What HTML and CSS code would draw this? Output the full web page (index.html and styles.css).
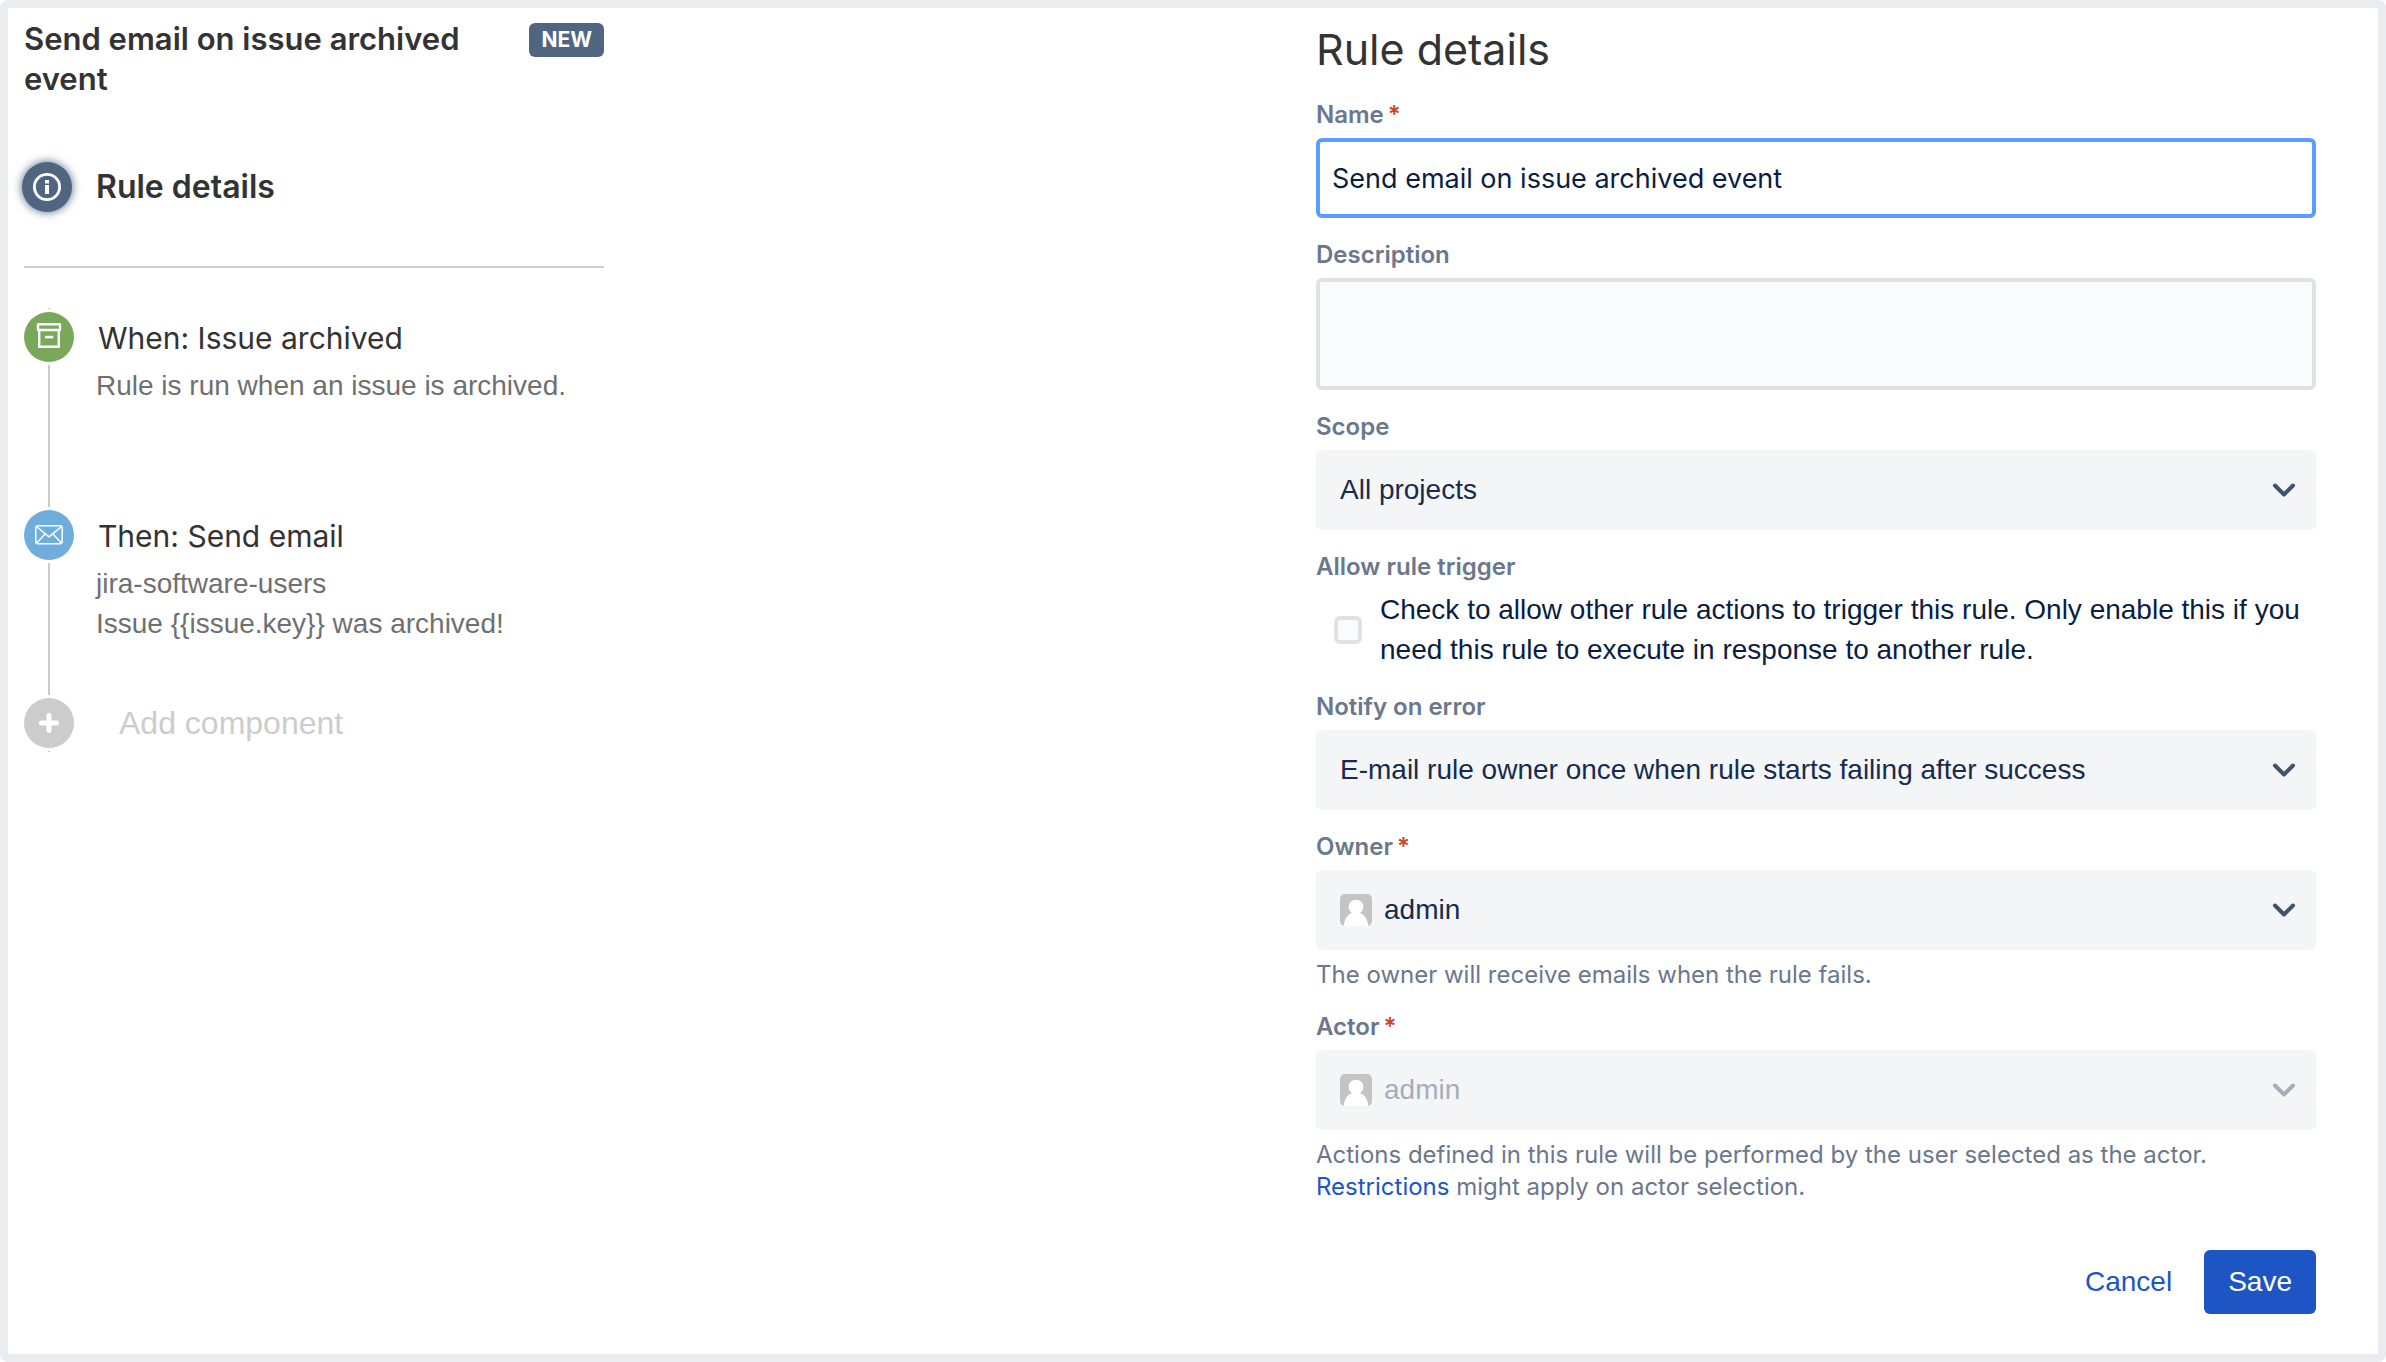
FILE: index.html
```html
<!DOCTYPE html>
<html lang="en">
<head>
<meta charset="utf-8">
<meta name="viewport" content="width=device-width, initial-scale=1">
<title>Send email on issue archived event</title>
<link rel="stylesheet" href="styles.css">
</head>
<body>
<main class="page">
  <aside class="outline">
    <header class="outline-header">
      <h1 class="rule-title">Send email on issue archived event</h1>
      <span class="badge">NEW</span>
    </header>
    <div class="outline-details">
      <span class="dot dot-info">
        <svg viewBox="0 0 50 50" aria-hidden="true"><circle cx="25" cy="25" r="12.6" fill="none" stroke="#fff" stroke-width="2.8"/><path d="M23 18h4v3.6h-4zM23 23h4v9h-4z" fill="#fff"/></svg>
      </span>
      <h2 class="details-title">Rule details</h2>
    </div>
    <ol class="steps">
      <li class="step">
        <span class="dot dot-trigger">
          <svg viewBox="0 0 50 50" aria-hidden="true"><g fill="none" stroke="#fff" stroke-width="2.4" stroke-linejoin="round"><path d="M14 12.2h22v5.8h-22z"/><path d="M15.2 18v16.8h19.6V18"/></g><path d="M21 23.8h8.2v2.6H21z" fill="#fff"/></svg>
        </span>
        <div>
          <h3 class="step-title">When: Issue archived</h3>
          <p class="step-text">Rule is run when an issue is archived.</p>
        </div>
      </li>
      <li class="step step-last">
        <span class="dot dot-action">
          <svg viewBox="0 0 50 50" aria-hidden="true"><g fill="none" stroke="#fff" stroke-width="1.5" stroke-linejoin="round"><rect x="11.8" y="15.8" width="26.4" height="18" rx="2.2"/><path d="M12.5 16.5L25 26.8L37.5 16.5M12.5 33.2L21 24M37.5 33.2L29 24"/></g></svg>
        </span>
        <div>
          <h3 class="step-title">Then: Send email</h3>
          <p class="step-text">jira-software-users<br>Issue {{issue.key}} was archived!</p>
        </div>
      </li>
      <li>
        <button class="add" type="button">
          <span class="dot dot-add">
            <svg viewBox="0 0 50 50" aria-hidden="true"><path d="M25 17.5v15M17.5 25h15" fill="none" stroke="#fff" stroke-width="5" stroke-linecap="round"/></svg>
          </span>
          <span class="add-text">Add component</span>
        </button>
      </li>
    </ol>
  </aside>

  <form class="form">
    <h2 class="form-title">Rule details</h2>

    <div class="field">
      <label class="label" for="name">Name<span class="required">*</span></label>
      <input class="input" id="name" type="text" value="Send email on issue archived event" required>
    </div>

    <div class="field">
      <label class="label" for="description">Description</label>
      <textarea class="textarea" id="description"></textarea>
    </div>

    <div class="field">
      <label class="label" for="scope">Scope</label>
      <div class="select-box">
        <select class="select" id="scope"><option>All projects</option></select>
        <svg class="chevron" viewBox="0 0 24 16" aria-hidden="true"><path d="M3 3.500L12 12.500L21 3.500"/></svg>
      </div>
    </div>

    <div class="field">
      <span class="label" id="trigger-label">Allow rule trigger</span>
      <div class="check-row">
        <input class="checkbox" id="trigger" type="checkbox" aria-describedby="trigger-label">
        <label for="trigger">Check to allow other rule actions to trigger this rule. Only enable this if you need this rule to execute in response to another rule.</label>
      </div>
    </div>

    <div class="field">
      <label class="label" for="notify">Notify on error</label>
      <div class="select-box">
        <select class="select" id="notify"><option>E-mail rule owner once when rule starts failing after success</option></select>
        <svg class="chevron" viewBox="0 0 24 16" aria-hidden="true"><path d="M3 3.500L12 12.500L21 3.500"/></svg>
      </div>
    </div>

    <div class="field">
      <label class="label" for="owner">Owner<span class="required">*</span></label>
      <div class="select-box">
        <select class="select select-user" id="owner"><option>admin</option></select>
        <svg class="avatar" viewBox="0 0 32 32" aria-hidden="true"><rect width="32" height="32" rx="5" fill="#c4c4c4"/><path d="M16 5.800c4.300 0 7.300 3 7.300 7 0 2.800-1.200 5-3.300 6.200 4.600 1.500 7.600 6 8.200 13H3.800c.6-7 3.600-11.500 8.200-13-2.100-1.200-3.300-3.400-3.300-6.200 0-4 3-7 7.300-7z" fill="#fff"/></svg>
        <svg class="chevron" viewBox="0 0 24 16" aria-hidden="true"><path d="M3 3.500L12 12.500L21 3.500"/></svg>
      </div>
      <p class="help">The owner will receive emails when the rule fails.</p>
    </div>

    <div class="field">
      <label class="label" for="actor">Actor<span class="required">*</span></label>
      <div class="select-box">
        <select class="select select-user" id="actor" disabled><option>admin</option></select>
        <svg class="avatar" viewBox="0 0 32 32" aria-hidden="true"><rect width="32" height="32" rx="5" fill="#c4c4c4"/><path d="M16 5.800c4.300 0 7.300 3 7.300 7 0 2.800-1.200 5-3.300 6.200 4.600 1.500 7.600 6 8.200 13H3.800c.6-7 3.600-11.500 8.200-13-2.100-1.200-3.300-3.400-3.300-6.200 0-4 3-7 7.300-7z" fill="#fff"/></svg>
        <svg class="chevron chevron-disabled" viewBox="0 0 24 16" aria-hidden="true"><path d="M3 3.500L12 12.500L21 3.500"/></svg>
      </div>
      <p class="help">Actions defined in this rule will be performed by the user selected as the actor. <a class="link" href="#restrictions">Restrictions</a> might apply on actor selection.</p>
    </div>

    <div class="actions">
      <button class="button button-link" type="button">Cancel</button>
      <button class="button button-primary" type="submit">Save</button>
    </div>
  </form>
</main>
</body>
</html>
```
FILE: styles.css
```css
* {
  box-sizing: border-box;
}

body,
h1,
h2,
h3,
p,
ol {
  margin: 0;
  padding: 0;
}

body {
  background: #fff;
  color: #333;
  font: 28px/40px "Liberation Sans", Arial, sans-serif;
}

.page {
  display: flex;
  justify-content: space-between;
  align-items: flex-start;
  gap: 48px;
  min-height: 100vh;
  padding: 11px 62px 40px 16px;
  border: 8px solid #ebecf0;
  border-radius: 8px;
}

/* Rule outline */

.outline {
  flex: 0 1 580px;
}

.outline-header {
  display: flex;
  justify-content: space-between;
  align-items: flex-start;
  gap: 24px;
}

.rule-title {
  font: 600 31px/40px Inter, sans-serif;
}

.details-title {
  font: 600 32px/40px Inter, sans-serif;
}

.badge {
  margin-top: 4px;
  padding: 0 12px;
  border-radius: 6px;
  background: #506680;
  color: #fff;
  font: 700 21px/34px Inter, sans-serif;
}

.outline-details {
  display: flex;
  align-items: center;
  gap: 24px;
  margin: 63px 0 0 -2px;
  padding-bottom: 54px;
}

.dot {
  flex: none;
  width: 50px;
  height: 50px;
  border-radius: 50%;
}

.dot svg {
  display: block;
  width: 50px;
  height: 50px;
}

.dot-info {
  background: #506680;
  box-shadow: 0 0 10px #506680;
}

.dot-trigger,
.dot-action,
.dot-add {
  box-shadow: 0 0 0 3px #fff;
}

.dot-trigger {
  background: #78a859;
}

.dot-action {
  background: #6eaddc;
}

.dot-add {
  background: #ccc;
}

.steps {
  position: relative;
  padding: 4px 0;
  margin-top: 42px;
  list-style: none;
  background: linear-gradient(#ccc, #ccc) 24px 0 / 2px 100% no-repeat;
}

/* Divider above the step list */
.steps::before {
  content: "";
  position: absolute;
  top: -42px;
  left: 0;
  right: 0;
  border-top: 2px solid #ccc;
}

.step {
  display: flex;
  align-items: flex-start;
  gap: 22px;
  padding-bottom: 64px;
}

.step-last {
  padding-bottom: 54px;
}

.step-title {
  padding-left: 2px;
  font: 400 30px/52px Inter, sans-serif;
}

.step-text {
  min-height: 80px;
  margin-top: 2px;
  color: #707070;
}

.add {
  display: flex;
  align-items: center;
  gap: 45px;
  padding: 0;
  border: 0;
  background: none;
  color: #ccc;
  font: 32px/50px "Liberation Sans", Arial, sans-serif;
  cursor: pointer;
}

/* Rule form */

.form {
  flex: 0 1 1000px;
  color: #091e42;
}

.form-title {
  margin-bottom: 20px;
  color: #333;
  font: 400 43px/60px Inter, sans-serif;
}

.field {
  margin-bottom: 21px;
}

.label {
  display: block;
  margin-bottom: 7px;
  color: #6b778c;
  font: 600 24px/32px Inter, sans-serif;
}

.required {
  padding-left: 4px;
  color: #d04424;
}

.input,
.textarea {
  display: block;
  width: 100%;
  border: 4px solid #dfe1e5;
  border-radius: 6px;
  padding: 8px 12px;
  background: #fafbfc;
  color: #091e42;
  font: 27px/40px Inter, sans-serif;
  outline: 0;
}

.input {
  height: 80px;
  border-color: #5c9bff;
  background: #fff;
}

.textarea {
  height: 112px;
  resize: none;
}

.select-box {
  position: relative;
}

.select {
  appearance: none;
  display: block;
  width: 100%;
  height: 80px;
  padding: 0 64px 0 24px;
  border: 0;
  border-radius: 6px;
  background: #f4f5f7;
  color: #172b4d;
  font: 28px/40px "Liberation Sans", Arial, sans-serif;
}

.select:disabled {
  color: #a5adba;
  opacity: 1;
}

.select-user {
  padding-left: 68px;
}

.avatar {
  position: absolute;
  top: 24px;
  left: 24px;
  width: 32px;
  height: 32px;
}

.chevron {
  position: absolute;
  top: 32px;
  right: 20px;
  width: 24px;
  height: 16px;
  fill: none;
  stroke: #42526e;
  stroke-width: 4;
  stroke-linecap: round;
  stroke-linejoin: round;
  pointer-events: none;
}

.chevron-disabled {
  stroke: #a5adba;
}

.check-row {
  display: flex;
  align-items: center;
  gap: 18px;
  padding-left: 18px;
}

.checkbox {
  appearance: none;
  flex: none;
  width: 28px;
  height: 28px;
  margin: 0;
  border: 4px solid #dfe1e5;
  border-radius: 6px;
  background: #fafbfc;
}

.help {
  margin: 9px 0 -1px;
  color: #6b778c;
  font: 24px/32px Inter, sans-serif;
}

.link {
  color: #1d55c4;
  text-decoration: none;
}

.actions {
  display: flex;
  justify-content: flex-end;
  gap: 8px;
  margin-top: 48px;
}

.button {
  height: 64px;
  padding: 0 24px;
  border: 0;
  border-radius: 6px;
  background: none;
  color: #1d55c4;
  font: 28px/40px "Liberation Sans", Arial, sans-serif;
  cursor: pointer;
}

.button-primary {
  background: #1d55c4;
  color: #fff;
}
```
